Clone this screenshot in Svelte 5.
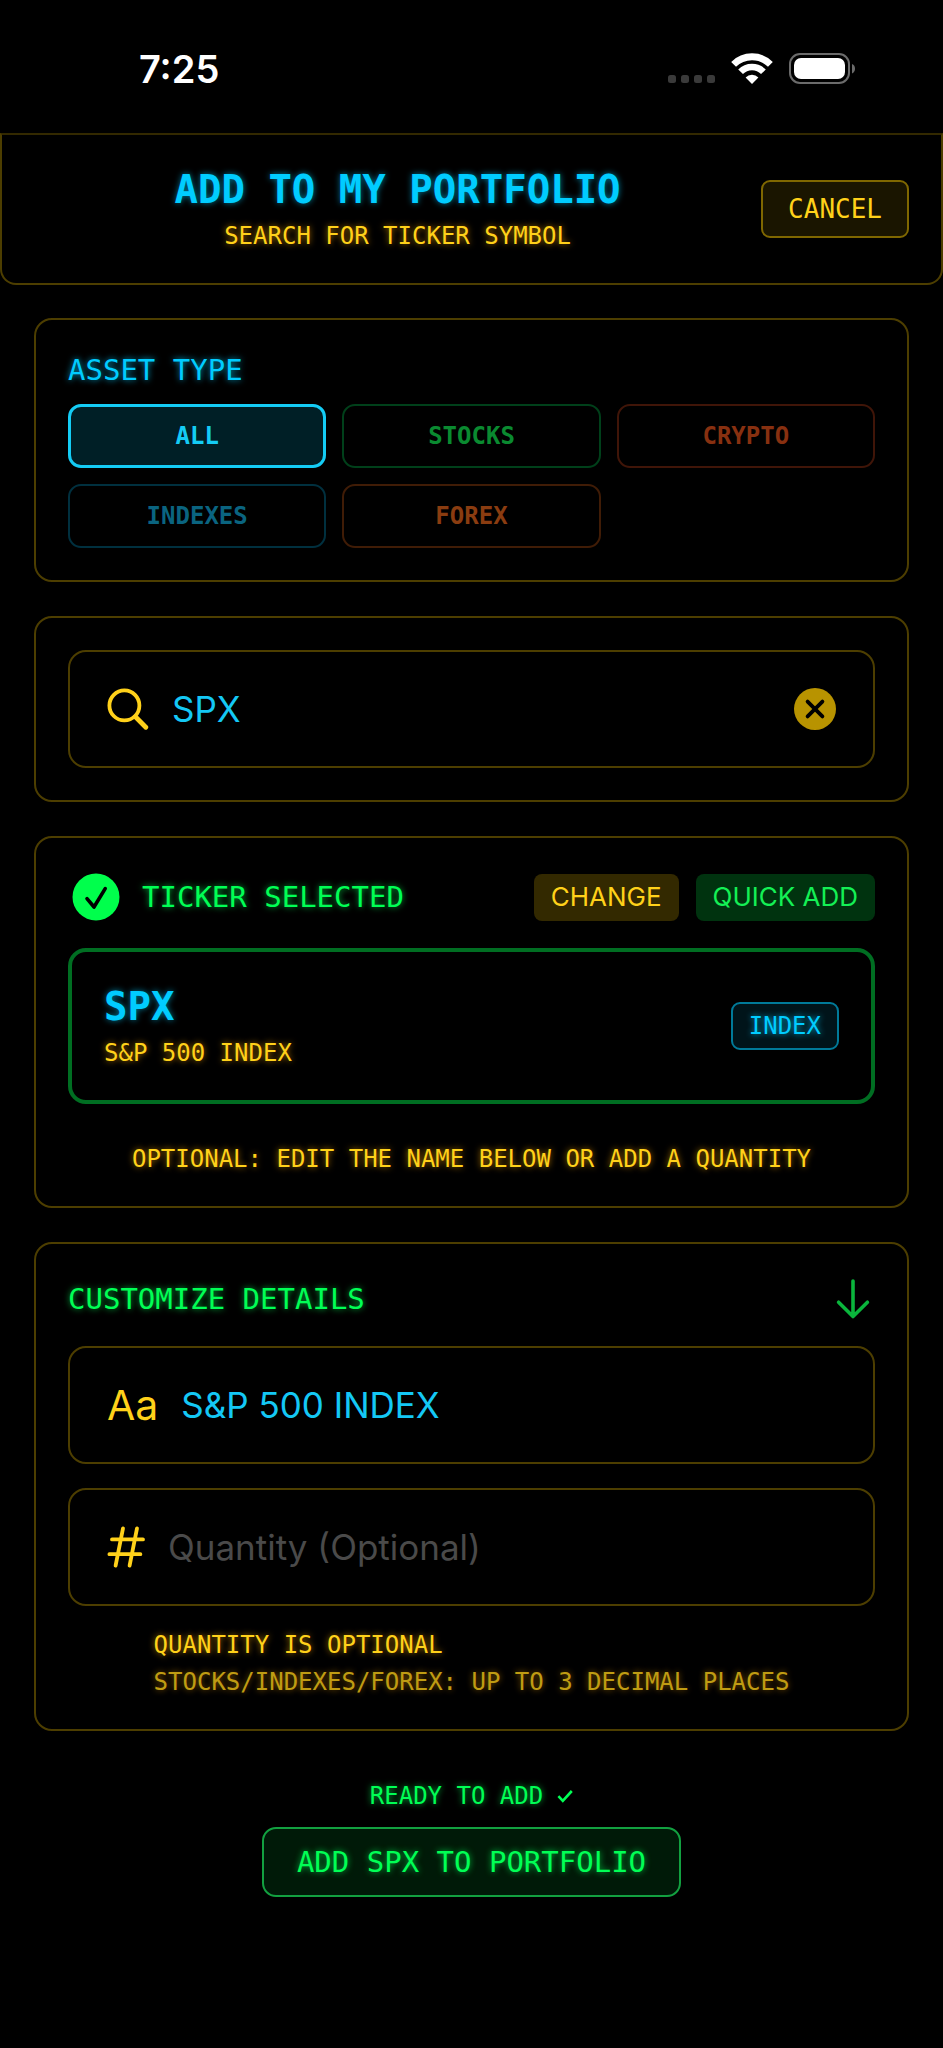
<script>
  let assetTypes = [
    { id: "all", label: "ALL" },
    { id: "stocks", label: "STOCKS" },
    { id: "crypto", label: "CRYPTO" },
    { id: "indexes", label: "INDEXES" },
    { id: "forex", label: "FOREX" }
  ];

  let selectedType = $state("all");
  let query = $state("SPX");
  let ticker = $state({ symbol: "SPX", name: "S&P 500 INDEX", kind: "INDEX" });
  let customName = $state("S&P 500 INDEX");
  let quantity = $state("");

  function clearSearch() {
    query = "";
  }
</script>

<div class="screen">
  <div class="status-bar">
    <span class="time">7:25</span>
    <div class="status-icons">
      <svg width="47" height="32" viewBox="0 0 47 32" fill="#3a3a3a">
        <rect x="0" y="22" width="8" height="8" rx="2.5" />
        <rect x="13" y="22" width="8" height="8" rx="2.5" />
        <rect x="26" y="22" width="8" height="8" rx="2.5" />
        <rect x="39" y="22" width="8" height="8" rx="2.5" />
      </svg>
      <svg width="42" height="32" viewBox="0 0 42 32" fill="none" stroke="#fff">
        <path d="M2.6 11.4A26 26 0 0 1 39.4 11.4" stroke-width="6.8" />
        <path d="M9.6 18.8A15.8 15.8 0 0 1 32.4 18.8" stroke-width="6.6" />
        <path d="M21 31l-6.4-6.5a9 9 0 0 1 12.8 0z" fill="#fff" stroke="none" />
      </svg>
      <svg width="67" height="32" viewBox="0 0 67 32">
        <rect x="1" y="1" width="59" height="29" rx="10" fill="none" stroke="#6b6b6b" stroke-width="2" />
        <rect x="5" y="5" width="51" height="21" rx="7" fill="#fff" />
        <path d="M63 11c4 1.2 4 8 0 9.5z" fill="#6b6b6b" />
      </svg>
    </div>
  </div>

  <header class="header">
    <div class="heading">
      <h1>ADD TO MY PORTFOLIO</h1>
      <p class="note">SEARCH FOR TICKER SYMBOL</p>
    </div>
    <button class="cancel">CANCEL</button>
  </header>

  <main>
    <section class="card">
      <h2 class="cyan">ASSET TYPE</h2>
      <div class="types">
        {#each assetTypes as type (type.id)}
          <button
            class="type {type.id}"
            class:active={selectedType === type.id}
            onclick={() => selectedType = type.id}
          >{type.label}</button>
        {/each}
      </div>
    </section>

    <section class="card">
      <div class="field">
        <svg width="42" height="42" viewBox="0 0 42 42" fill="none" stroke="#ffd11a" stroke-linecap="round">
          <circle cx="17.4" cy="17.4" r="15" stroke-width="3.8" />
          <path d="M28.4 28.8l10.4 10.4" stroke-width="4.8" />
        </svg>
        <input type="text" aria-label="Ticker symbol" bind:value={query} />
        <button class="clear" aria-label="Clear search" onclick={clearSearch}>
          <svg width="42" height="42" viewBox="0 0 42 42">
            <circle cx="21" cy="21" r="21" fill="#b89300" />
            <path d="M13.6 13.6l14.8 14.8M28.4 13.6L13.6 28.4" stroke="#000" stroke-width="3.8" stroke-linecap="round" />
          </svg>
        </button>
      </div>
    </section>

    <section class="card">
      <div class="selected-head">
        <svg width="48" height="48" viewBox="0 0 48 48">
          <circle cx="24" cy="24" r="23.5" fill="#00ff4c" />
          <path d="M15 25.6l7 8.4L33.2 15.6" fill="none" stroke="#000" stroke-width="3.6" stroke-linecap="round" stroke-linejoin="round" />
        </svg>
        <h2 class="green">TICKER SELECTED</h2>
        <button class="pill gold">CHANGE</button>
        <button class="pill lime">QUICK ADD</button>
      </div>
      <div class="ticker">
        <div>
          <h3>{ticker.symbol}</h3>
          <p class="note">{ticker.name}</p>
        </div>
        <span class="badge">{ticker.kind}</span>
      </div>
      <p class="note hint">OPTIONAL: EDIT THE NAME BELOW OR ADD A QUANTITY</p>
    </section>

    <section class="card details">
      <div class="details-head">
        <h2 class="green">CUSTOMIZE DETAILS</h2>
        <svg width="44" height="42" viewBox="0 0 44 42" fill="none" stroke="#0ab53c" stroke-width="3.6" stroke-linecap="round" stroke-linejoin="round">
          <path d="M22 3v35.4M7.6 24.2L22 38.6l14.4-14.4" />
        </svg>
      </div>
      <div class="field">
        <label class="aa" for="name">Aa</label>
        <input id="name" type="text" bind:value={customName} />
      </div>
      <div class="field">
        <label class="hash" for="quantity" aria-label="Quantity">
          <svg width="38" height="42" viewBox="0 0 38 42" fill="none" stroke="#ffd11a" stroke-width="3.8" stroke-linecap="round">
            <path d="M5 13.4h31M2.4 28.2h31M16 2.4L8.6 39.6M30 2.4l-7.4 37.2" />
          </svg>
        </label>
        <input id="quantity" type="text" inputmode="decimal" placeholder="Quantity (Optional)" bind:value={quantity} />
      </div>
      <div class="rules">
        <p class="note">QUANTITY IS OPTIONAL</p>
        <p class="note dim">STOCKS/INDEXES/FOREX: UP TO 3 DECIMAL PLACES</p>
      </div>
    </section>
  </main>

  <footer>
    <p class="note ready">
      READY TO ADD
      <svg width="16" height="16" viewBox="0 0 16 16" fill="none" stroke="#00ff55" stroke-width="2.6">
        <path d="M1.4 8.2l4.4 4.6L14.8 3" />
      </svg>
    </p>
    <button class="submit">ADD {ticker.symbol} TO PORTFOLIO</button>
  </footer>
</div>

<style>
  :global(body) {
    background: #000;
  }
  .screen {
    min-height: 100vh;
    background: #000;
    color: #ffd11a;
    font-family: "DejaVu Sans Mono", "Liberation Mono", monospace;
  }
  h1, h2, h3, p { margin: 0; }
  button {
    font-family: inherit;
    cursor: pointer;
  }
  svg { display: block; flex: none; }

  .status-bar {
    display: flex;
    align-items: center;
    justify-content: space-between;
    height: 133px;
    padding: 4px 87px 0 139px;
    box-sizing: border-box;
  }
  .time {
    color: #fff;
    font: 600 38px/46px Inter, sans-serif;
  }
  .status-icons {
    display: flex;
    gap: 16px;
  }

  .header {
    display: flex;
    align-items: center;
    padding: 32px;
    border: 2px solid rgba(255, 204, 0, 0.3);
    border-top-color: rgba(255, 204, 0, 0.2);
    border-radius: 0 0 16px 16px;
  }
  .heading {
    flex: 1;
    text-align: center;
  }
  h1, h3 {
    margin-bottom: 8px;
    color: #00ccff;
    font-size: 39px;
    line-height: 46px;
    font-weight: 700;
    text-shadow: 0 0 6px rgba(0, 204, 255, 0.6);
  }
  .note {
    font-size: 24px;
    line-height: 30px;
    text-shadow: 0 0 6px rgba(255, 170, 0, 0.7);
  }
  .cancel {
    height: 58px;
    padding: 0 25px;
    border: 2px solid #7f6700;
    border-radius: 9px;
    background: #1a1500;
    color: #ffd11a;
    font-size: 26px;
  }

  main {
    display: flex;
    flex-direction: column;
    gap: 34px;
    padding: 33px 34px 0;
  }
  .card {
    padding: 32px;
    border: 2px solid rgba(255, 204, 0, 0.3);
    border-radius: 18px;
  }
  h2 {
    font-size: 29px;
    line-height: 36px;
    font-weight: 400;
  }
  .cyan {
    color: #00ccff;
    text-shadow: 0 0 6px rgba(0, 204, 255, 0.8);
  }
  .green {
    color: #00ff55;
    text-shadow: 0 0 6px rgba(0, 255, 85, 0.7);
  }

  .types {
    display: grid;
    grid-template-columns: repeat(3, 1fr);
    gap: 16px;
    margin-top: 16px;
  }
  .type {
    height: 64px;
    padding: 0;
    border: 2px solid;
    border-radius: 13px;
    background: none;
    font-size: 24px;
    font-weight: 700;
  }
  .all { color: #14ccf5; border-color: #00303f; }
  .stocks { color: #0a8a30; border-color: #00401a; }
  .crypto { color: #883010; border-color: #401508; }
  .indexes { color: #0a6480; border-color: #00303f; }
  .forex { color: #8a3c10; border-color: #401c06; }
  .active {
    border: 3px solid currentColor;
    background: #001f26;
  }

  .field {
    display: flex;
    align-items: center;
    gap: 23px;
    height: 118px;
    padding: 0 37px;
    box-sizing: border-box;
    border: 2px solid rgba(255, 204, 0, 0.3);
    border-radius: 18px;
  }
  .field input {
    flex: 1;
    min-width: 0;
    padding: 0;
    border: none;
    outline: none;
    background: none;
    color: #14c8f5;
    font: 400 35px/44px Inter, sans-serif;
  }
  .field input::placeholder { color: #4a4a4a; opacity: 1; }
  .clear {
    padding: 0;
    border: none;
    background: none;
  }
  .aa { font: 400 41px/48px Inter, sans-serif; }

  .selected-head {
    display: flex;
    align-items: center;
    gap: 17px;
    height: 54px;
    padding-left: 4px;
  }
  .selected-head h2 {
    flex: 1;
    padding-left: 5px;
  }
  .pill {
    height: 47px;
    padding: 0 17px;
    border: none;
    border-radius: 8px;
    font: 400 26px/32px Inter, sans-serif;
  }
  .gold { background: #332900; color: #ffd11a; }
  .lime { background: #00330f; color: #14f055; }

  .ticker {
    display: flex;
    align-items: center;
    justify-content: space-between;
    margin-top: 24px;
    padding: 32px;
    border: 4px solid #006e22;
    border-radius: 18px;
  }
  .badge {
    padding: 7px 16px;
    border: 2px solid #007a99;
    border-radius: 9px;
    background: #00141a;
    color: #00ccff;
    font-size: 24px;
    line-height: 30px;
    text-shadow: 0 0 6px rgba(0, 204, 255, 0.8);
  }
  .hint {
    margin-top: 40px;
    text-align: center;
  }

  .details {
    display: flex;
    flex-direction: column;
    gap: 24px;
  }
  .details-head {
    display: flex;
    align-items: center;
    justify-content: space-between;
    height: 46px;
  }
  .rules {
    display: flex;
    flex-direction: column;
    gap: 7px;
    align-self: center;
  }
  .dim { opacity: 0.75; }

  footer {
    display: flex;
    flex-direction: column;
    align-items: center;
    gap: 16px;
    padding: 50px 34px;
  }
  .ready {
    display: flex;
    align-items: center;
    gap: 14px;
    color: #00ff55;
    text-shadow: 0 0 6px rgba(0, 255, 85, 0.7);
  }
  .submit {
    height: 70px;
    padding: 0 33px;
    border: 2px solid #12a040;
    border-radius: 14px;
    background: #001a08;
    color: #00ff55;
    font-size: 29px;
    text-shadow: 0 0 6px rgba(0, 255, 85, 0.7);
  }
</style>
